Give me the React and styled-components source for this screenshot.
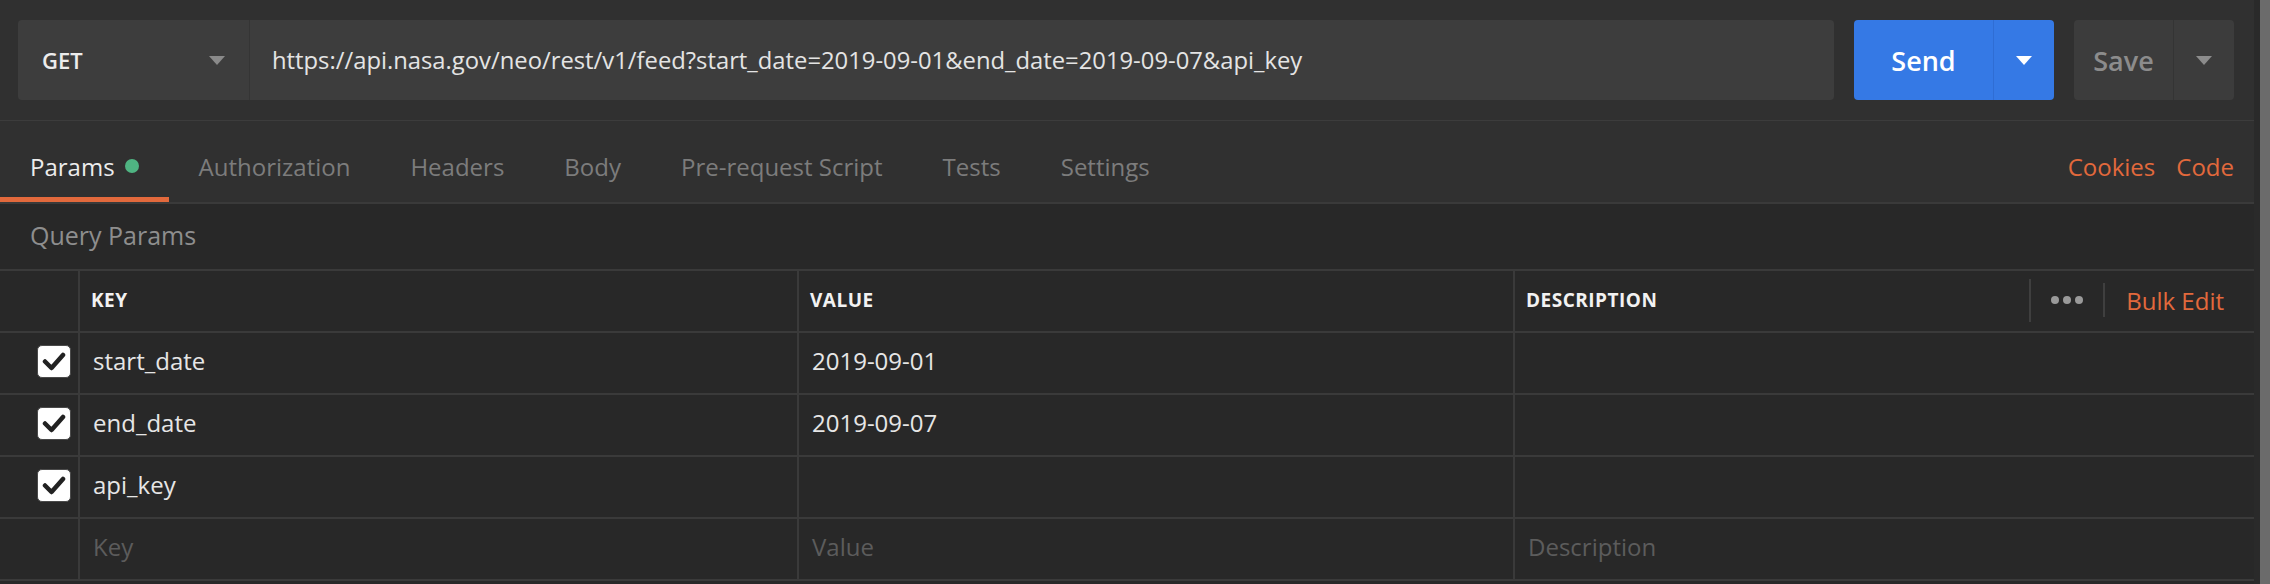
import React from 'react';
import styled, { createGlobalStyle, css } from 'styled-components';

const GlobalStyle = createGlobalStyle`
  html,
  body {
    margin: 0;
    padding: 0;
    background-color: #282828;
  }

  body {
    font-family: 'Open Sans', 'Liberation Sans', sans-serif;
  }

  * {
    box-sizing: border-box;
  }
`;

const ORANGE = '#e2693c';
const LINE = '#3a3a3a';

const Window = styled.div`
  display: flex;
  width: 100%;
  height: 584px;
  overflow: hidden;
`;

const Main = styled.main`
  flex: 1;
  display: flex;
  flex-direction: column;
  min-width: 0;
`;

const ScrollTrack = styled.div`
  width: 16px;
  display: flex;
  justify-content: flex-end;
  background-color: #2a2a2a;
`;

const ScrollThumb = styled.div`
  width: 10px;
  background-color: #6b6b6b;
`;

const TopBar = styled.div`
  display: flex;
  gap: 20px;
  padding: 20px 20px 20px 18px;
  background-color: #303030;
  border-bottom: 1px solid #3c3c3c;
`;

const RequestBox = styled.div`
  flex: 1;
  display: flex;
  height: 80px;
  border-radius: 4px;
  background-color: #3d3d3d;
  overflow: hidden;
`;

const MethodSelect = styled.div`
  width: 232px;
  display: flex;
  align-items: center;
  justify-content: space-between;
  padding: 0 24px;
  border-right: 1px solid #353535;
  font-size: 22px;
  font-weight: 600;
  color: #ececec;
`;

const Caret = styled.span`
  width: 0;
  height: 0;
  border-left: 8px solid transparent;
  border-right: 8px solid transparent;
  border-top: 9px solid ${({ $color }) => $color || '#8a8a8a'};
`;

const UrlInput = styled.div`
  flex: 1;
  display: flex;
  align-items: center;
  padding-left: 22px;
  font-size: 23.8px;
  color: #e4e4e4;
  white-space: nowrap;
  overflow: hidden;
`;

const SplitButton = styled.div`
  display: flex;
  height: 80px;
  border-radius: 4px;
  overflow: hidden;
  font-size: 27px;
  font-weight: 600;
  ${({ $variant }) =>
    $variant === 'primary'
      ? css`
          background-color: #3579e5;
          color: #ffffff;
        `
      : css`
          background-color: #3c3c3c;
          color: #8c8c8c;
        `};
`;

const ButtonLabel = styled.div`
  width: ${({ $width }) => $width}px;
  display: flex;
  align-items: center;
  justify-content: center;
`;

const ButtonArrow = styled.div`
  width: 61px;
  display: flex;
  align-items: center;
  justify-content: center;
  border-left: 1px solid
    ${({ $variant }) => ($variant === 'primary' ? '#2f6dd4' : '#343434')};
`;

const TabBar = styled.div`
  display: flex;
  height: 83px;
  background-color: #303030;
  border-bottom: 2px solid ${LINE};
`;

const Tab = styled.div`
  display: flex;
  align-items: center;
  padding: 14px 30px 0;
  font-size: 24px;
  color: ${({ $active }) => ($active ? '#ececec' : '#7c7c7c')};
  border-bottom: 5px solid ${({ $active }) => ($active ? ORANGE : 'transparent')};
`;

const Dot = styled.span`
  width: 14px;
  height: 14px;
  margin-left: 10px;
  border-radius: 50%;
  background-color: #4fb482;
`;

const TabLinks = styled.div`
  display: flex;
  align-items: center;
  gap: 21px;
  margin-left: auto;
  padding: 14px 20px 5px 0;
  font-size: 24px;
  color: ${ORANGE};
`;

const SectionTitle = styled.div`
  height: 65px;
  display: flex;
  align-items: center;
  padding: 0 0 3px 30px;
  font-size: 25px;
  color: #8e8e8e;
`;

const Table = styled.div`
  border-top: 2px solid ${LINE};
`;

const Row = styled.div`
  display: grid;
  grid-template-columns: 78px 719px 716px 1fr;
  height: 62px;
  border-bottom: 2px solid ${LINE};
`;

const Cell = styled.div`
  display: flex;
  align-items: center;
  padding: 0 0 ${({ $head }) => ($head ? 2 : 5)}px ${({ $head }) => ($head ? 11 : 13)}px;
  font-size: ${({ $head }) => ($head ? 19 : 24)}px;
  font-weight: ${({ $head }) => ($head ? 700 : 400)};
  letter-spacing: ${({ $head }) => ($head ? '0.5px' : 'normal')};
  color: ${({ $head, $placeholder }) =>
    $head ? '#f2f2f2' : $placeholder ? '#5c5c5c' : '#e6e6e6'};
  border-left: 2px solid ${LINE};
  white-space: nowrap;
`;

const CheckCell = styled.div`
  display: flex;
  align-items: center;
  justify-content: flex-end;
  padding: 0 7px 4px 0;
`;

const CheckBox = styled.span`
  width: 34px;
  height: 33px;
  display: flex;
  align-items: center;
  justify-content: center;
  border-radius: 5px;
  background-color: #ffffff;
  border: 1px solid #4a4a4a;
`;

const HeadTools = styled.div`
  display: flex;
  align-items: center;
  margin-left: auto;
  padding-right: 30px;
  font-size: 24px;
  font-weight: 400;
  letter-spacing: normal;
  color: ${ORANGE};
`;

const Separator = styled.span`
  width: 2px;
  height: ${({ $height }) => $height}px;
  background-color: #3f3f3f;
`;

const MoreDots = styled.span`
  display: flex;
  gap: 4px;
  margin: 0 20px;

  & > i {
    width: 8px;
    height: 8px;
    border-radius: 50%;
    background-color: #9a9a9a;
  }
`;

const BulkEdit = styled.span`
  margin-left: 21px;
`;

const tabs = [
  'Params',
  'Authorization',
  'Headers',
  'Body',
  'Pre-request Script',
  'Tests',
  'Settings'
];

const params = [
  { key: 'start_date', value: '2019-09-01' },
  { key: 'end_date', value: '2019-09-07' },
  { key: 'api_key', value: '' }
];

const Check = () => (
  <CheckBox>
    <svg width="24" height="22" viewBox="0 0 24 22">
      <path
        d="M3 11.5 L9.5 18 L21 5"
        fill="none"
        stroke="#222222"
        strokeWidth="4.5"
        strokeLinecap="round"
        strokeLinejoin="round"
      />
    </svg>
  </CheckBox>
);

const App = () => (
  <>
    <GlobalStyle />
    <Window>
      <Main>
        <TopBar>
          <RequestBox>
            <MethodSelect>
              GET
              <Caret />
            </MethodSelect>
            <UrlInput>
              https://api.nasa.gov/neo/rest/v1/feed?start_date=2019-09-01&amp;end_date=2019-09-07&amp;api_key
            </UrlInput>
          </RequestBox>
          <SplitButton $variant="primary">
            <ButtonLabel $width={139}>Send</ButtonLabel>
            <ButtonArrow $variant="primary">
              <Caret $color="#ffffff" />
            </ButtonArrow>
          </SplitButton>
          <SplitButton>
            <ButtonLabel $width={99}>Save</ButtonLabel>
            <ButtonArrow>
              <Caret $color="#8c8c8c" />
            </ButtonArrow>
          </SplitButton>
        </TopBar>

        <TabBar>
          {tabs.map((name, i) => (
            <Tab key={name} $active={i === 0}>
              {name}
              {i === 0 && <Dot />}
            </Tab>
          ))}
          <TabLinks>
            <span>Cookies</span>
            <span>Code</span>
          </TabLinks>
        </TabBar>

        <SectionTitle>Query Params</SectionTitle>

        <Table>
          <Row>
            <CheckCell />
            <Cell $head>KEY</Cell>
            <Cell $head>VALUE</Cell>
            <Cell $head>
              DESCRIPTION
              <HeadTools>
                <Separator $height={43} />
                <MoreDots>
                  <i />
                  <i />
                  <i />
                </MoreDots>
                <Separator $height={34} />
                <BulkEdit>Bulk Edit</BulkEdit>
              </HeadTools>
            </Cell>
          </Row>
          {params.map(({ key, value }) => (
            <Row key={key}>
              <CheckCell>
                <Check />
              </CheckCell>
              <Cell>{key}</Cell>
              <Cell>{value}</Cell>
              <Cell />
            </Row>
          ))}
          <Row>
            <CheckCell />
            <Cell $placeholder>Key</Cell>
            <Cell $placeholder>Value</Cell>
            <Cell $placeholder>Description</Cell>
          </Row>
        </Table>
      </Main>
      <ScrollTrack>
        <ScrollThumb />
      </ScrollTrack>
    </Window>
  </>
);

export default App;
